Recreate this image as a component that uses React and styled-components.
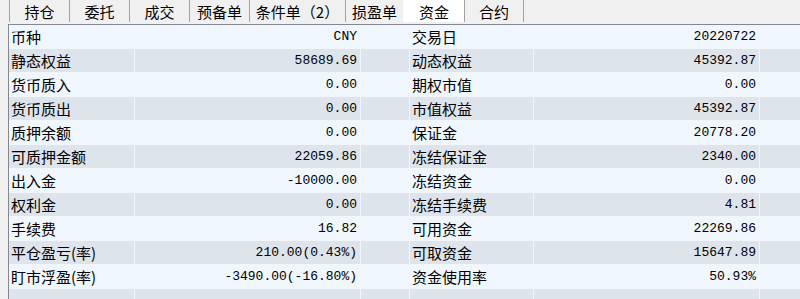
import React from "react";
import styled, { createGlobalStyle } from "styled-components";

const GlobalStyle = createGlobalStyle`
  html, body {
    margin: 0;
    padding: 0;
    background: #f0f0f0;
    overflow: hidden;
  }
`;

const tabs = [
  { name: "持仓", w: 60 },
  { name: "委托", w: 60 },
  { name: "成交", w: 60 },
  { name: "预备单", w: 60 },
  { name: "条件单（2）", w: 96 },
  { name: "损盈单", w: 58 },
  { name: "资金", w: 61, active: true },
  { name: "合约", w: 60, last: true },
];

const rows = [
  ["币种", "CNY", "交易日", "20220722"],
  ["静态权益", "58689.69", "动态权益", "45392.87"],
  ["货币质入", "0.00", "期权市值", "0.00"],
  ["货币质出", "0.00", "市值权益", "45392.87"],
  ["质押余额", "0.00", "保证金", "20778.20"],
  ["可质押金额", "22059.86", "冻结保证金", "2340.00"],
  ["出入金", "-10000.00", "冻结资金", "0.00"],
  ["权利金", "0.00", "冻结手续费", "4.81"],
  ["手续费", "16.82", "可用资金", "22269.86"],
  ["平仓盈亏(率)", "210.00(0.43%)", "可取资金", "15647.89"],
  ["盯市浮盈(率)", "-3490.00(-16.80%)", "资金使用率", "50.93%"],
  ["", "", "", ""],
];

const App = () => {
  return (
    <Page>
      <GlobalStyle />
      <TabBar>
        {tabs.map((t) => (
          <Tab key={t.name} $w={t.w} $active={t.active} $last={t.last}>
            {t.name}
          </Tab>
        ))}
      </TabBar>
      <Table>
        {rows.map((r, i) => (
          <Row key={i} $alt={i % 2 === 1}>
            <Label $w={127}>{r[0]}</Label>
            <Value>{r[1]}</Value>
            <Blank />
            <Label $w={125}>{r[2]}</Label>
            <Value>{r[3]}</Value>
            <Blank />
          </Row>
        ))}
      </Table>
    </Page>
  );
};

const Page = styled.div`
  width: 800px;
  height: 299px;
  background: #f0f0f0;
  overflow: hidden;
`;

const TabBar = styled.div`
  display: flex;
  height: 22px;
  padding-left: 9px;
  margin-bottom: 2px;
`;

const Tab = styled.div`
  box-sizing: border-box;
  width: ${(p) => p.$w}px;
  flex: none;
  height: 22px;
  display: flex;
  align-items: center;
  justify-content: center;
  font-family: "Noto Sans CJK SC", sans-serif;
  font-size: 15px;
  color: #000;
  background: ${(p) => (p.$active ? "#ffffff" : "transparent")};
  border-left: 1px solid ${(p) => (p.$active ? "transparent" : "#a0a0a0")};
  border-right: ${(p) => (p.$last ? "1px solid #a0a0a0" : "none")};
`;

const Table = styled.div`
  margin-left: 8px;
  width: 810px;
  border-top: 1px solid #828790;
  border-left: 1px solid #828790;
`;

const Row = styled.div`
  display: flex;
  height: 24px;
  box-sizing: border-box;
  border-bottom: 1px solid #f2f5f9;
  background: ${(p) => (p.$alt ? "#dee4ec" : "#eff6fe")};
`;

const Cell = styled.div`
  box-sizing: border-box;
  flex: none;
  height: 100%;
  display: flex;
  align-items: center;
  border-right: 1px solid #f2f5f9;
  color: #000;
  white-space: nowrap;
`;

const Label = styled(Cell)`
  width: ${(p) => p.$w - 1}px;
  padding-left: 2px;
  font-family: "Noto Sans CJK SC", sans-serif;
  font-size: 15px;
`;

const Value = styled(Cell)`
  width: 226px;
  justify-content: flex-end;
  padding-right: 3px;
  font-family: "Liberation Mono", monospace;
  font-size: 13px;
`;

const Blank = styled(Cell)`
  width: 49px;
`;

export default App;
